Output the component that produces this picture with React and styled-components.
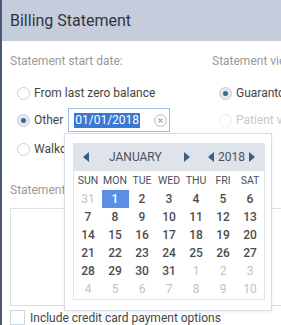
import styled, { createGlobalStyle } from "styled-components";

const Global = createGlobalStyle`
    html, body {
        margin: 0;
        padding: 0;
        background: #ffffff;
        overflow: hidden;
    }
    body {
        font-family: Roboto, "Liberation Sans", sans-serif;
    }
`

const Frame = styled.div`
    display: flex;
    width: 281px;
    height: 325px;
    overflow: hidden;
`

const Edge = styled.div`
    width: 2px;
    flex: none;
    background: #4a5a74;
`

const Dialog = styled.div`
    position: relative;
    flex: 1;
    display: flex;
    flex-direction: column;
    min-width: 0;
`

const Header = styled.div`
    height: 41px;
    flex: none;
    display: flex;
    align-items: center;
    padding-left: 8px;
    background: #c5cddc;
    font-size: 16px;
    color: #2f3540;
`

const Body = styled.div`
    padding-left: 8px;
    display: flex;
    flex-direction: column;
`

const Columns = styled.div`
    display: grid;
    grid-template-columns: 202px 1fr;
    padding-top: 12px;
`

const Col = styled.div`
    display: flex;
    flex-direction: column;
    white-space: nowrap;
    overflow: hidden;
`

const Label = styled.div`
    font-size: 12px;
    line-height: 16px;
    color: #9a9a9a;
    white-space: nowrap;
    margin-top: ${p => p.$mt || 0}px;
`

const Row = styled.div`
    display: flex;
    align-items: center;
    height: ${p => p.$h}px;
    margin-top: ${p => p.$mt}px;
    padding-left: 7px;
    gap: 4px;
    font-size: 12px;
    color: ${p => (p.$disabled ? "#c8c8c8" : "#444")};
`

const Radio = styled.span`
    box-sizing: border-box;
    width: 13px;
    height: 13px;
    flex: none;
    border-radius: 50%;
    border: 1px solid ${p => (p.$disabled ? "#ececec" : "#c9ced6")};
    background: ${p => (p.$checked ? "#e3e9f0" : "#fff")};
    display: flex;
    align-items: center;
    justify-content: center;
    &::after {
        content: "";
        width: 5px;
        height: 5px;
        border-radius: 50%;
        background: #3e6a96;
        display: ${p => (p.$checked ? "block" : "none")};
    }
`

const Input = styled.div`
    margin-left: 1px;
    border: 1px solid #9fbbe6;
    display: flex;
    align-items: center;
    padding-left: 5px;
    box-sizing: border-box;
    width: 102px;
    height: 24px;
    gap: 14px;
`

const Selected = styled.span`
    background: #3a78d6;
    color: #fff;
    font-size: 12px;
    line-height: 15px;
    padding: 0 1px;
`

const Clear = styled.svg`
    width: 13px;
    height: 13px;
    flex: none;
`

const Box = styled.div`
    margin-top: 10px;
    height: 96px;
    border: 1px solid #d8e0ea;
    border-right: none;
`

const CheckRow = styled.div`
    display: flex;
    align-items: center;
    gap: 5px;
    margin-top: 4px;
    font-size: 12px;
    color: #444;
    white-space: nowrap;
`

const Check = styled.span`
    width: 13px;
    height: 13px;
    border: 1px solid #cfd5dd;
    flex: none;
`

const Popup = styled.div`
    position: absolute;
    left: 62px;
    top: 133px;
    width: 208px;
    height: 178px;
    box-sizing: border-box;
    background: #fff;
    border: 1px solid #d6dde7;
    box-shadow: 0 1px 3px rgba(0, 0, 0, 0.08);
    padding: 9px 8px;
`

const Calendar = styled.div`
    width: 190px;
    border: 1px solid #e1e6ed;
    border-top: none;
`

const CalHead = styled.div`
    height: 28px;
    background: #dfe4eb;
    display: flex;
    align-items: center;
    font-size: 12px;
    color: #4a5160;
`

const Arrow = styled.span`
    width: 0;
    height: 0;
    flex: none;
    border-top: 5px solid transparent;
    border-bottom: 5px solid transparent;
    ${p => (p.$left ? "border-right: 6px solid #3b5f80;" : "border-left: 6px solid #3b5f80;")}
    margin-left: ${p => p.$ml || 0}px;
`

const Month = styled.span`
    margin-left: 20px;
    width: 50px;
`

const Year = styled.span`
    margin: 0 4px;
    font-size: 12px;
`

const Grid = styled.div`
    display: grid;
    grid-template-columns: repeat(7, 27px);
    justify-content: center;
    padding-bottom: 1px;
`

const DayName = styled.div`
    height: 19px;
    line-height: 19px;
    text-align: center;
    font-size: 10.5px;
    color: #4a4f58;
`

const Cell = styled.div`
    height: 18px;
    line-height: 18px;
    text-align: center;
    font-size: 12px;
    color: ${p => (p.$sel ? "#fff" : p.$other ? "#c2c2c2" : "#4c4c4c")};
    font-weight: ${p => (p.$other ? 400 : 500)};
    background: ${p => (p.$sel ? "#5b8fe6" : "transparent")};
`

const days = ["SUN", "MON", "TUE", "WED", "THU", "FRI", "SAT"]

const dates = [
    31, 1, 2, 3, 4, 5, 6,
    7, 8, 9, 10, 11, 12, 13,
    14, 15, 16, 17, 18, 19, 20,
    21, 22, 23, 24, 25, 26, 27,
    28, 29, 30, 31, 1, 2, 3,
    4, 5, 6, 7, 8, 9, 10,
]

const App = () => (
    <Frame>
        <Global />
        <Edge />
        <Dialog>
            <Header>Billing Statement</Header>
            <Body>
                <Columns>
                    <Col>
                        <Label>Statement start date:</Label>
                        <Row $h={22} $mt={13}><Radio />From last zero balance</Row>
                        <Row $h={24} $mt={4}>
                            <Radio $checked />Other
                            <Input>
                                <Selected>01/01/2018</Selected>
                                <Clear viewBox="0 0 13 13">
                                    <circle cx="6.5" cy="6.5" r="5.8" fill="none" stroke="#b5b9bf" strokeWidth="1" />
                                    <path d="M4.5 4.5 L8.5 8.5 M8.5 4.5 L4.5 8.5" stroke="#a9adb3" strokeWidth="1.4" />
                                </Clear>
                            </Input>
                        </Row>
                        <Row $h={22} $mt={6}><Radio />Walkout</Row>
                    </Col>
                    <Col>
                        <Label>Statement view:</Label>
                        <Row $h={22} $mt={13}><Radio $checked />Guarantor</Row>
                        <Row $h={24} $mt={4} $disabled><Radio $disabled />Patient view</Row>
                    </Col>
                </Columns>
                <Label $mt={22}>Statement message:</Label>
                <Box />
                <CheckRow><Check />Include credit card payment options</CheckRow>
            </Body>
            <Popup>
                <Calendar>
                    <CalHead>
                        <Arrow $left $ml={9} />
                        <Month>JANUARY</Month>
                        <Arrow $ml={25} />
                        <Arrow $left $ml={18} />
                        <Year>2018</Year>
                        <Arrow />
                    </CalHead>
                    <Grid>
                        {days.map(d => <DayName key={d}>{d}</DayName>)}
                        {dates.map((d, i) => (
                            <Cell key={i} $sel={i === 1} $other={i === 0 || i > 31}>{d}</Cell>
                        ))}
                    </Grid>
                </Calendar>
            </Popup>
        </Dialog>
    </Frame>
)

export default App
